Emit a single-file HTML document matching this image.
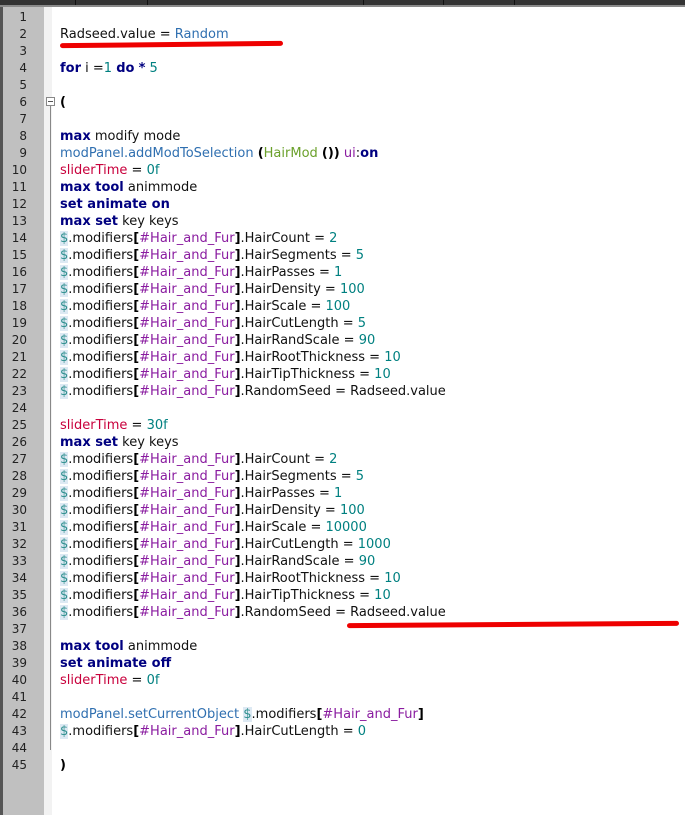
<!DOCTYPE html>
<html><head><style>
*{margin:0;padding:0}
body{width:685px;height:815px;background:#fff;position:relative;overflow:hidden;font-family:"DejaVu Sans","Liberation Sans",sans-serif;font-size:13px}
.top{position:absolute;left:0;top:0;width:685px;height:5px;background:#333}
.top i{position:absolute;top:0;width:1px;height:5px;background:#111}
.topl{position:absolute;left:0;top:5px;width:685px;height:2px;background:#8a8a8a}
.lb{position:absolute;left:0;top:7px;width:3px;height:808px;background:#555}
.gut{position:absolute;left:3px;top:7px;width:41px;height:808px;background:#c0c0c0}
.fold{position:absolute;left:44px;top:7px;width:8px;height:808px;background:#f2f2f2}
.fl{position:absolute;left:50px;top:106px;width:1px;height:644px;background:#888}
.fb{position:absolute;left:46px;top:97px;width:9px;height:9px;border:1px solid #888;background:#fff;box-sizing:border-box}
.fb:after{content:"";position:absolute;left:1px;top:3px;width:5px;height:1px;background:#555}
.ln{position:absolute;left:3px;width:24px;text-align:right;color:#222;font-size:12px;line-height:17px}
.c{position:absolute;left:60px;white-space:pre;line-height:17px;color:#111}
b{color:#000080}
.n{color:#008080}.s{color:#c8003c}.f{color:#2f6fb0}.g{color:#6aa02a}.h{color:#8a1ca0}.k{font-weight:bold;color:#000}
.d{color:#2f8f8f;background:#dde9f3}
.r{position:absolute;height:5px;background:#e00;border-radius:3px}
</style></head><body>
<div class="top"><i style="left:75px"></i><i style="left:147px"></i><i style="left:363px"></i><i style="left:443px"></i><i style="left:514px"></i></div>
<div class="topl"></div><div class="lb"></div><div class="gut"></div><div class="fold"></div><div class="fl"></div><div class="fb"></div>
<div class="c" style="top:26px">Radseed.value = <span class="f">Random</span></div>
<div class="r" style="left:60px;top:42px;width:223px;transform:rotate(-0.6deg)"></div>
<div class="c" style="top:60px"><b>for</b> i =<span class="n">1</span> <b>do</b> <b>*</b> <span class="n">5</span></div>
<div class="c" style="top:94px"><span class="k">(</span></div>
<div class="c" style="top:128px"><b>max</b> modify mode
<span class="f">modPanel.addModToSelection</span> <span class="k">(</span><span class="g">HairMod</span> <span class="k">())</span> <span class="h">ui</span>:<b>on</b>
<span class="s">sliderTime</span> = <span class="n">0f</span>
<b>max tool</b> animmode
<b>set animate on</b>
<b>max set</b> key keys
<span class="d">$</span>.modifiers<span class="k">[</span><span class="h">#Hair_and_Fur</span><span class="k">]</span>.HairCount = <span class="n">2</span>
<span class="d">$</span>.modifiers<span class="k">[</span><span class="h">#Hair_and_Fur</span><span class="k">]</span>.HairSegments = <span class="n">5</span>
<span class="d">$</span>.modifiers<span class="k">[</span><span class="h">#Hair_and_Fur</span><span class="k">]</span>.HairPasses = <span class="n">1</span>
<span class="d">$</span>.modifiers<span class="k">[</span><span class="h">#Hair_and_Fur</span><span class="k">]</span>.HairDensity = <span class="n">100</span>
<span class="d">$</span>.modifiers<span class="k">[</span><span class="h">#Hair_and_Fur</span><span class="k">]</span>.HairScale = <span class="n">100</span>
<span class="d">$</span>.modifiers<span class="k">[</span><span class="h">#Hair_and_Fur</span><span class="k">]</span>.HairCutLength = <span class="n">5</span>
<span class="d">$</span>.modifiers<span class="k">[</span><span class="h">#Hair_and_Fur</span><span class="k">]</span>.HairRandScale = <span class="n">90</span>
<span class="d">$</span>.modifiers<span class="k">[</span><span class="h">#Hair_and_Fur</span><span class="k">]</span>.HairRootThickness = <span class="n">10</span>
<span class="d">$</span>.modifiers<span class="k">[</span><span class="h">#Hair_and_Fur</span><span class="k">]</span>.HairTipThickness = <span class="n">10</span>
<span class="d">$</span>.modifiers<span class="k">[</span><span class="h">#Hair_and_Fur</span><span class="k">]</span>.RandomSeed = Radseed.value

<span class="s">sliderTime</span> = <span class="n">30f</span>
<b>max set</b> key keys
<span class="d">$</span>.modifiers<span class="k">[</span><span class="h">#Hair_and_Fur</span><span class="k">]</span>.HairCount = <span class="n">2</span>
<span class="d">$</span>.modifiers<span class="k">[</span><span class="h">#Hair_and_Fur</span><span class="k">]</span>.HairSegments = <span class="n">5</span>
<span class="d">$</span>.modifiers<span class="k">[</span><span class="h">#Hair_and_Fur</span><span class="k">]</span>.HairPasses = <span class="n">1</span>
<span class="d">$</span>.modifiers<span class="k">[</span><span class="h">#Hair_and_Fur</span><span class="k">]</span>.HairDensity = <span class="n">100</span>
<span class="d">$</span>.modifiers<span class="k">[</span><span class="h">#Hair_and_Fur</span><span class="k">]</span>.HairScale = <span class="n">10000</span>
<span class="d">$</span>.modifiers<span class="k">[</span><span class="h">#Hair_and_Fur</span><span class="k">]</span>.HairCutLength = <span class="n">1000</span>
<span class="d">$</span>.modifiers<span class="k">[</span><span class="h">#Hair_and_Fur</span><span class="k">]</span>.HairRandScale = <span class="n">90</span>
<span class="d">$</span>.modifiers<span class="k">[</span><span class="h">#Hair_and_Fur</span><span class="k">]</span>.HairRootThickness = <span class="n">10</span>
<span class="d">$</span>.modifiers<span class="k">[</span><span class="h">#Hair_and_Fur</span><span class="k">]</span>.HairTipThickness = <span class="n">10</span>
<span class="d">$</span>.modifiers<span class="k">[</span><span class="h">#Hair_and_Fur</span><span class="k">]</span>.RandomSeed = Radseed.value

<b>max tool</b> animmode
<b>set animate off</b>
<span class="s">sliderTime</span> = <span class="n">0f</span>

<span class="f">modPanel.setCurrentObject</span> <span class="d">$</span>.modifiers<span class="k">[</span><span class="h">#Hair_and_Fur</span><span class="k">]</span>
<span class="d">$</span>.modifiers<span class="k">[</span><span class="h">#Hair_and_Fur</span><span class="k">]</span>.HairCutLength = <span class="n">0</span>

<span class="k">)</span></div>
<div class="r" style="left:347px;top:622px;width:332px;transform:rotate(-0.4deg)"></div>
<div class="ln" style="top:9px;white-space:pre">1
2
3
4
5
6
7
8
9
10
11
12
13
14
15
16
17
18
19
20
21
22
23
24
25
26
27
28
29
30
31
32
33
34
35
36
37
38
39
40
41
42
43
44
45</div>
</body></html>
